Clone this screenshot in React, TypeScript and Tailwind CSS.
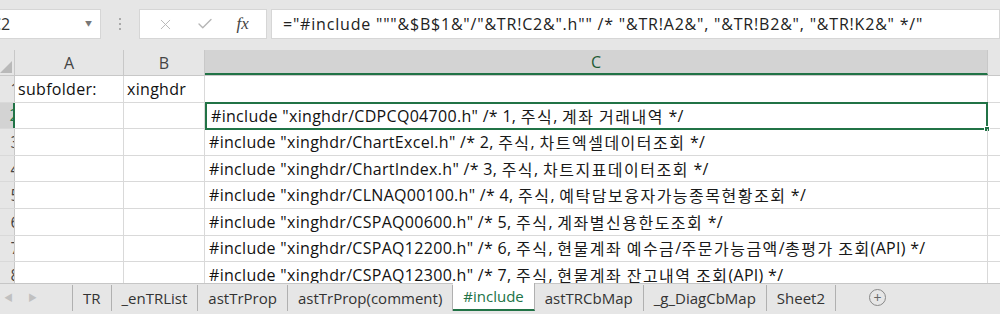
import { Check, X } from "lucide-react";

const font = { fontFamily: '"Open Sans", "Noto Sans CJK KR", sans-serif' };

const rows = [
  '#include "xinghdr/CDPCQ04700.h" /* 1, 주식, 계좌 거래내역 */',
  '#include "xinghdr/ChartExcel.h" /* 2, 주식, 차트엑셀데이터조회 */',
  '#include "xinghdr/ChartIndex.h" /* 3, 주식, 차트지표데이터조회 */',
  '#include "xinghdr/CLNAQ00100.h" /* 4, 주식, 예탁담보융자가능종목현황조회 */',
  '#include "xinghdr/CSPAQ00600.h" /* 5, 주식, 계좌별신용한도조회 */',
  '#include "xinghdr/CSPAQ12200.h" /* 6, 주식, 현물계좌 예수금/주문가능금액/총평가 조회(API) */',
  '#include "xinghdr/CSPAQ12300.h" /* 7, 주식, 현물계좌 잔고내역 조회(API) */',
];

const tabs = ["TR", "_enTRList", "astTrProp", "astTrProp(comment)", "#include", "astTRCbMap", "_g_DiagCbMap", "Sheet2"];

// Hangul runs get a little more room, as the sheet font sets them wider
function CellText({ text }: { text: string }) {
  const parts = text.split(/([\uac00-\ud7a3]+)/);
  return (
    <>
      {parts.map((p, i) =>
        /[\uac00-\ud7a3]/.test(p) ? (
          <span key={i} className="tracking-[1.5px] text-[#1a1a1a]" style={{ fontFamily: '"Noto Sans CJK KR", sans-serif' }}>
            {p}
          </span>
        ) : (
          <span key={i}>{p}</span>
        )
      )}
    </>
  );
}

function FormulaBar() {
  return (
    <div className="h-[50px] bg-[#e6e6e6] flex items-center pb-[2px]">
      <div className="w-[102px] h-[30px] bg-white border border-[#d6d6d6] flex items-center justify-between pr-[8px] -ml-[1px] overflow-hidden">
        <span className="text-[16px] text-[#333] -ml-[9px]">C2</span>
        <span className="text-[7px] text-[#777]">▼</span>
      </div>
      <div className="w-[38px] flex flex-col items-center gap-[3px]">
        <span className="w-[2px] h-[2px] bg-[#aaa]" />
        <span className="w-[2px] h-[2px] bg-[#aaa]" />
        <span className="w-[2px] h-[2px] bg-[#aaa]" />
      </div>
      <div className="w-[128px] h-[30px] bg-white border border-[#d6d6d6] flex items-center justify-around px-[6px]">
        <X size={17} strokeWidth={1.3} className="text-[#b5b5b5]" />
        <Check size={18} strokeWidth={1.8} className="text-[#b5b5b5]" />
        <span className="text-[17px] italic text-[#444]" style={{ fontFamily: '"Liberation Serif", serif' }}>
          fx
        </span>
      </div>
      <div className="flex-1 ml-[4px] h-[30px] bg-white border border-[#d6d6d6] flex items-center pl-[11px] text-[16px] tracking-[0.8px] text-[#222] whitespace-pre">
        {'="#include """&$B$1&"/"&TR!C2&".h"" /* "&TR!A2&", "&TR!B2&", "&TR!K2&" */"'}
      </div>
    </div>
  );
}

function Grid() {
  return (
    <div className="h-[233px] overflow-hidden bg-white">
      <div className="flex h-[26px] bg-[#e6e6e6] border-b border-[#c8c8c8]">
        <div className="w-[15px] bg-[#e6e6e6] border-r border-[#c8c8c8] relative overflow-hidden">
          <div className="absolute right-[2px] bottom-[2px] w-0 h-0 border-l-[12px] border-l-transparent border-b-[12px] border-b-[#b9b9b9]" />
        </div>
        <div className="w-[109px] border-r border-[#c8c8c8] flex items-center justify-center text-[16px] text-[#444]">A</div>
        <div className="w-[81px] border-r border-[#c8c8c8] flex items-center justify-center text-[16px] text-[#444]">B</div>
        <div className="w-[783px] bg-[#d3d3d3] border-r border-[#c8c8c8] border-b-2 border-b-[#217346] flex items-center justify-center text-[16px] text-[#1e5a36]">
          C
        </div>
        <div className="flex-1 bg-[#e6e6e6]" />
      </div>
      <Row num="1" a="subfolder:" b="xinghdr" c="" />
      {rows.map((r, i) => (
        <Row key={i} num={String(i + 2)} a="" b="" c={r} selected={i === 0} />
      ))}
    </div>
  );
}

function Row({ num, a, b, c, selected }: { num: string; a: string; b: string; c: string; selected?: boolean }) {
  return (
    <div className="flex h-[26.6px] border-b border-[#d9d9d9] text-[16px] tracking-[0.3px] text-[#111]">
      <div
        className={`w-[15px] border-r border-[#c8c8c8] overflow-hidden flex items-center justify-end pr-[10px] ${
          selected ? "bg-[#d3d3d3] text-[#217346] border-r-2 border-r-[#217346]" : "bg-[#e6e6e6] text-[#444]"
        }`}
      >
        <span className="-mr-[16px]">{num}</span>
      </div>
      <div className="w-[109px] border-r border-[#d9d9d9] flex items-center pl-[3px] whitespace-nowrap">{a}</div>
      <div className="w-[81px] border-r border-[#d9d9d9] flex items-center pl-[3px] whitespace-nowrap">{b}</div>
      <div
        className={`w-[783px] flex items-center pl-[4px] whitespace-pre relative ${
          selected ? "border-2 border-[#217346] -mt-[1px] h-[28px]" : "border-r border-[#d9d9d9]"
        }`}
      >
        <CellText text={c} />
        {selected && <span className="absolute -right-[4px] -bottom-[4px] w-[6px] h-[6px] bg-[#217346] border border-white" />}
      </div>
      <div className="flex-1" />
    </div>
  );
}

function TabBar() {
  return (
    <div className="h-[31px] bg-[#e6e6e6] border-t border-[#c6c6c6] flex items-start text-[15px] text-[#333]">
      <div className="w-[73px] h-[26px] flex items-center border-r border-[#b0b0b0] mt-[1px]">
        <span className="ml-[4px] text-[9px] text-[#c0c0c0]">◀</span>
        <span className="ml-[15px] text-[9px] text-[#c0c0c0]">▶</span>
      </div>
      {tabs.map((t) => {
        const active = t === "#include";
        return (
          <div
            key={t}
            className={`px-[10px] flex items-center whitespace-nowrap border-r border-[#b0b0b0] ${
              active ? "bg-white text-[#217346] border-b-2 border-b-[#217346] -mt-[1px] h-[28px]" : "mt-[1px] h-[26px]"
            }`}
          >
            {t}
          </div>
        );
      })}
      <div className="ml-[33px] mt-[5px] w-[17px] h-[17px] rounded-full border border-[#888] flex items-center justify-center text-[14px] leading-none text-[#666]">
        +
      </div>
    </div>
  );
}

export default function App() {
  return (
    <div className="w-[1000px] h-[314px] overflow-hidden bg-[#e6e6e6]" style={font}>
      <FormulaBar />
      <Grid />
      <TabBar />
    </div>
  );
}
